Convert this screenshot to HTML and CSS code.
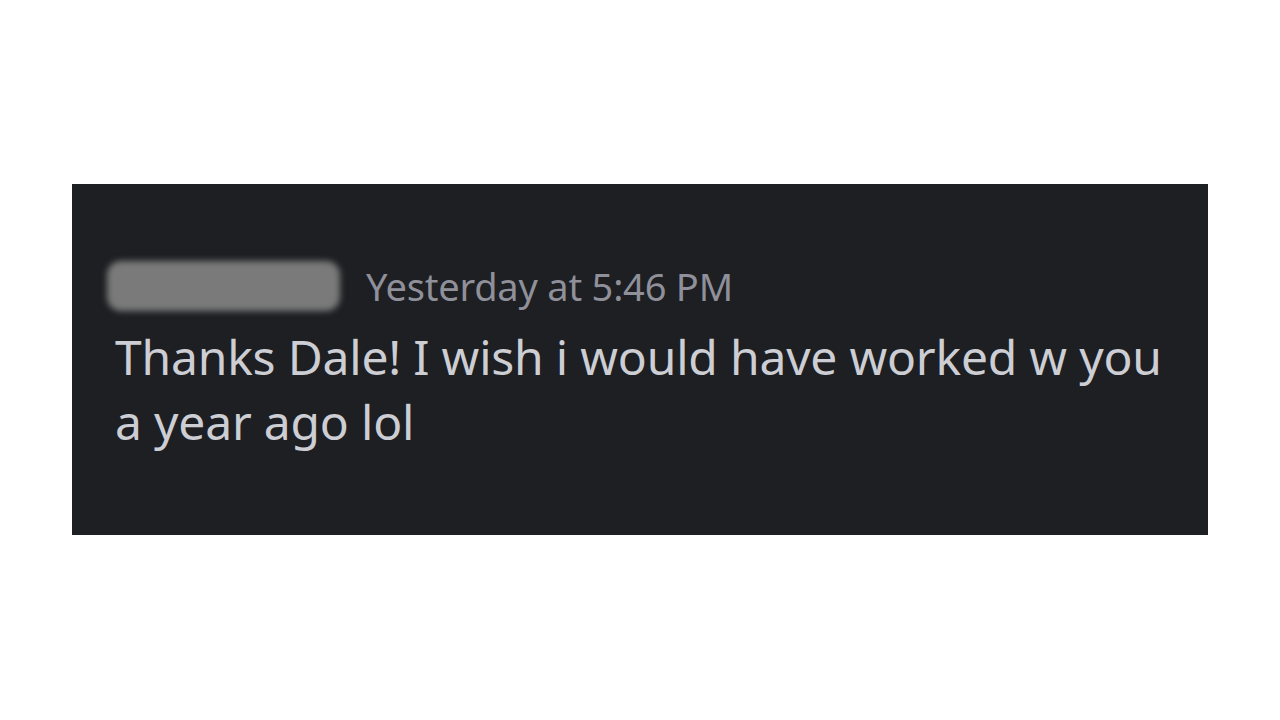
FILE: index.html
```html
<!DOCTYPE html>
<html>
<head>
<meta charset="utf-8">
<link rel="stylesheet" href="styles.css">
</head>
<body>
<div class="page">
  <div class="card">
    <div class="header">
      <div class="name-blur"></div>
      <span class="time">Yesterday at 5:46 PM</span>
    </div>
    <div class="message">Thanks Dale! I wish i would have worked w you a year ago lol</div>
  </div>
</div>
</body>
</html>
```
FILE: styles.css
```css
html, body {
  margin: 0;
  padding: 0;
  background: #ffffff;
}
.page {
  width: 1280px;
  height: 720px;
  padding-top: 184px;
  padding-left: 72px;
  box-sizing: border-box;
}
.card {
  width: 1136px;
  height: 351px;
  background: #1e1f23;
  box-sizing: border-box;
  padding: 74px 30px 0 43px;
  font-family: "Noto Sans", "Open Sans", sans-serif;
}
.header {
  display: flex;
  align-items: center;
  gap: 26px;
  height: 56px;
}
.name-blur {
  width: 233px;
  height: 50px;
  border-radius: 14px;
  background: #7a7a7a;
  filter: blur(3px);
  margin-left: -8px;
}
.time {
  color: #8f909a;
  font-size: 38px;
  letter-spacing: -0.2px;
}
.message {
  color: #cdced4;
  font-size: 48px;
  line-height: 65px;
  letter-spacing: -0.2px;
  margin-top: 10px;
}
```
